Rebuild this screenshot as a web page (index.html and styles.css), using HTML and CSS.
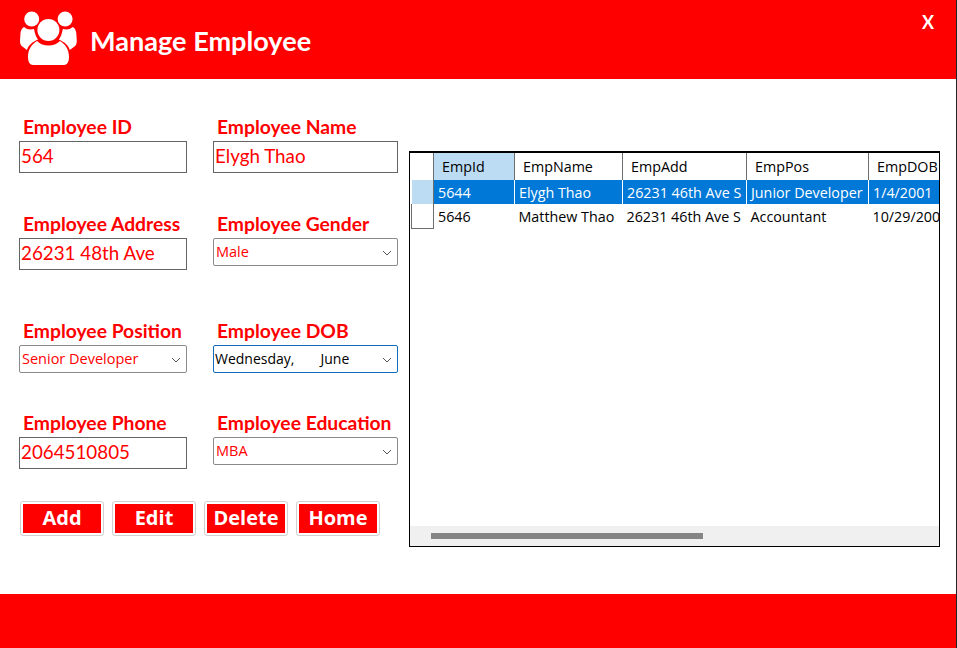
FILE: index.html
```html
<!DOCTYPE html>
<html>

<head>
    <title>Manage Employee</title>
    <link rel="stylesheet" href="styles.css">
</head>

<body>
    <header class="top">
        <svg class="logo" viewBox="0 0 57 54" width="57" height="54">
            <circle cx="11.700" cy="8" r="7.500" />
            <circle cx="45.100" cy="8" r="7.500" />
            <path d="M4 16 C7 18.500 10 19 14 18 C15 23 16 26 18 28.500 C12 31 8 35 7 39 L3 36 C1 35 0 33 0 30 L0.500 22 C1 19 2 17 4 16 Z" />
            <path d="M52.800 16 C49.800 18.500 46.800 19 42.800 18 C41.800 23 40.800 26 38.800 28.500 C44.800 31 48.800 35 49.800 39 L53.800 36 C55.800 35 56.800 33 56.800 30 L56.300 22 C55.800 19 54.800 17 52.800 16 Z" />
            <circle cx="28.400" cy="19" r="11" />
            <path d="M8 46 C8 38 12 33 17 30 C20 33 24 34.500 28.400 34.500 C33 34.500 37 33 40 30 C45 33 49 38 49 46 C49 51 47 54 44 54 L13 54 C10 54 8 51 8 46 Z" />
        </svg>
        <h1 class="title">Manage Employee</h1>
        <span class="close">X</span>
    </header>

    <main class="content">
        <section class="form">
            <div class="field">
                <label>Employee ID</label>
                <div class="textbox">564</div>
            </div>
            <div class="field">
                <label>Employee Name</label>
                <div class="textbox">Elygh Thao</div>
            </div>
            <div class="field">
                <label>Employee Address</label>
                <div class="textbox">26231 48th Ave</div>
            </div>
            <div class="field">
                <label>Employee Gender</label>
                <div class="combo">Male
                    <svg viewBox="0 0 10 6" width="10" height="6"><path d="M1 1 L5 5 L9 1" /></svg>
                </div>
            </div>
            <div class="field">
                <label>Employee Position</label>
                <div class="combo">Senior Developer
                    <svg viewBox="0 0 10 6" width="10" height="6"><path d="M1 1 L5 5 L9 1" /></svg>
                </div>
            </div>
            <div class="field">
                <label>Employee DOB</label>
                <div class="combo date"><span>Wednesday,</span><span>June</span>
                    <svg viewBox="0 0 10 6" width="10" height="6"><path d="M1 1 L5 5 L9 1" /></svg>
                </div>
            </div>
            <div class="field">
                <label>Employee Phone</label>
                <div class="textbox">2064510805</div>
            </div>
            <div class="field">
                <label>Employee Education</label>
                <div class="combo">MBA
                    <svg viewBox="0 0 10 6" width="10" height="6"><path d="M1 1 L5 5 L9 1" /></svg>
                </div>
            </div>
            <div class="buttons">
                <button>Add</button>
                <button>Edit</button>
                <button>Delete</button>
                <button>Home</button>
            </div>
        </section>

        <section class="grid">
            <div class="table-wrap">
                <table>
                    <thead>
                        <tr>
                            <th class="corner"></th>
                            <th class="c-id sorted">EmpId</th>
                            <th class="c-name">EmpName</th>
                            <th class="c-add">EmpAdd</th>
                            <th class="c-pos">EmpPos</th>
                            <th class="c-dob">EmpDOB</th>
                        </tr>
                    </thead>
                    <tbody>
                        <tr class="selected">
                            <th class="rowhead"></th>
                            <td>5644</td>
                            <td>Elygh Thao</td>
                            <td>26231 46th Ave S</td>
                            <td>Junior Developer</td>
                            <td>1/4/2001</td>
                        </tr>
                        <tr>
                            <th class="rowhead"></th>
                            <td>5646</td>
                            <td>Matthew Thao</td>
                            <td>26231 46th Ave S</td>
                            <td>Accountant</td>
                            <td>10/29/2001</td>
                        </tr>
                    </tbody>
                </table>
            </div>
            <div class="scrollbar">
                <div class="thumb"></div>
            </div>
        </section>
    </main>

    <footer class="bottom"></footer>
</body>

</html>
```

FILE: styles.css
```css
* {
    box-sizing: border-box;
}

body {
    margin: 0;
    width: 957px;
    height: 648px;
    display: flex;
    flex-direction: column;
    overflow: hidden;
    background: #fff;
    border-right: 1px solid #222;
    font-family: "Lato", "Liberation Sans", sans-serif;
}

.top {
    height: 79px;
    background: #f00;
    color: #fff;
    display: flex;
    align-items: flex-start;
    padding: 11px 0 0 20px;
    position: relative;
}

.logo {
    fill: #fff;
    flex: none;
}

.title {
    margin: 14px 0 0 13px;
    font-size: 27.100px;
    line-height: 32px;
    font-weight: 700;
}

.close {
    position: absolute;
    top: 12px;
    right: 22px;
    font-size: 18px;
    line-height: 20px;
    font-weight: 700;
}

.content {
    flex: 1;
    display: flex;
    padding: 37px 16px 0 19px;
}

.form {
    width: 379px;
    display: grid;
    grid-template-columns: 168px 185px;
    grid-template-rows: 97px 107px 92px 89px 40px;
    column-gap: 26px;
}

.field label {
    display: block;
    height: 25px;
    padding-left: 4px;
    color: #f00;
    font-size: 19.300px;
    line-height: 22px;
    font-weight: 700;
    white-space: nowrap;
}

.textbox {
    height: 32px;
    border: 1px solid #646464;
    padding-left: 1px;
    color: #f00;
    font-size: 18.800px;
    line-height: 28px;
}

.combo {
    height: 28px;
    border: 1px solid #8a8a8a;
    border-radius: 2px;
    padding: 0 0 1px 2px;
    display: flex;
    align-items: center;
    color: #f00;
    font-family: "Open Sans", "Liberation Sans", sans-serif;
    font-size: 14.500px;
    position: relative;
}

.combo svg {
    position: absolute;
    top: 11px;
    right: 5px;
    fill: none;
    stroke: #555;
    stroke-width: 1;
}

.date {
    border-color: #0f6cbd;
    color: #000;
    font-size: 14px;
    padding-left: 1px;
    gap: 26px;
}

.buttons {
    grid-column: 1 / 3;
    display: flex;
    gap: 8px;
    padding-left: 1px;
    align-items: flex-start;
}

.buttons button {
    width: 84px;
    height: 35px;
    background: #f00;
    color: #fff;
    border: 3px solid #fff;
    border-radius: 3px;
    outline: 1px solid #d0d0d0;
    outline-offset: -1px;
    padding: 0 0 2px;
    font-family: "Open Sans", "Liberation Sans", sans-serif;
    font-size: 20px;
    font-weight: 700;
}

.grid {
    width: 531px;
    height: 396px;
    margin: 35px 0 0 11px;
    border: 1px solid #000;
    border-top-width: 2px;
    display: flex;
    flex-direction: column;
    font-family: "Open Sans", "Liberation Sans", sans-serif;
    font-size: 14.300px;
}

.table-wrap {
    flex: 1;
    overflow: hidden;
}

table {
    border-collapse: collapse;
    table-layout: fixed;
    width: 558px;
    margin-left: 1px;
}

thead th {
    height: 27px;
    padding: 0 0 0 8px;
    border-right: 1px solid #6e6e6e;
    font-weight: 400;
    text-align: left;
    white-space: nowrap;
    overflow: hidden;
}

.corner {
    width: 22px;
}

.sorted {
    background: #bcdcf4;
}

.c-id { width: 81px; }
.c-name { width: 108px; }
.c-add { width: 124px; }
.c-pos { width: 122px; }
.c-dob { width: 101px; }

tbody td {
    height: 24px;
    padding: 0 0 0 4px;
    white-space: nowrap;
    overflow: hidden;
}

.rowhead {
    border-left: 1px solid #6e6e6e;
    border-right: 1px solid #6e6e6e;
    border-bottom: 1px solid #6e6e6e;
    padding: 0;
}

.selected td {
    background: #0078d7;
    color: #fff;
    border-right: 1px solid #fff;
}

.selected .rowhead {
    background: #bcdcf4;
    border-left: 0;
    border-bottom: 0;
}

.scrollbar {
    height: 20px;
    background: #f0f0f0;
    padding: 7px 0 0 21px;
}

.thumb {
    width: 272px;
    height: 6px;
    background: #858585;
}

.bottom {
    height: 54px;
    background: #f00;
}
```
